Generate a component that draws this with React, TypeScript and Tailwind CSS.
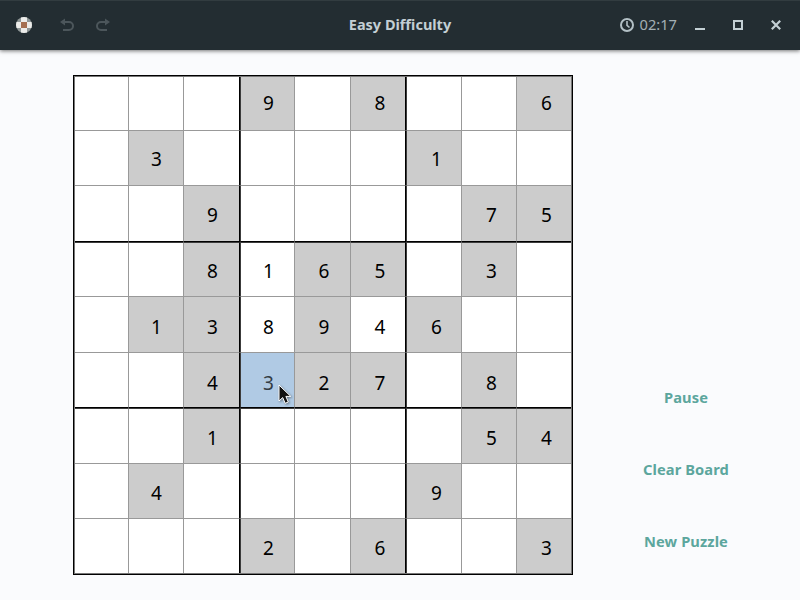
import React from "react";

// "g" prefix marks a given clue, plain digits are the player's entries.
const BOARD = [
  ["", "", "", "g9", "", "g8", "", "", "g6"],
  ["", "g3", "", "", "", "", "g1", "", ""],
  ["", "", "g9", "", "", "", "", "g7", "g5"],
  ["", "", "g8", "1", "g6", "g5", "", "g3", ""],
  ["", "g1", "g3", "8", "g9", "4", "g6", "", ""],
  ["", "", "g4", "3", "g2", "g7", "", "g8", ""],
  ["", "", "g1", "", "", "", "", "g5", "g4"],
  ["", "g4", "", "", "", "", "g9", "", ""],
  ["", "", "", "g2", "", "g6", "", "", "g3"],
];

const PAD_X = ["pl-px", "pl-px", "pl-[2px]", "pl-[2px]", "pl-[3px]", "pl-[4px]", "pl-[5px]", "pl-[5px]", "pl-[5px]"];
const PAD_Y = ["pt-0", "pt-[2px]", "pt-[4px]", "pt-[4px]", "pt-[6px]", "pt-[6px]", "pt-[5px]", "pt-[5px]", "pt-[5px]"];

const vertical = (c: number) =>
  [
    c === 8 ? "" : c % 3 === 2 ? "border-r border-r-black" : "border-r border-r-[#999999]",
    c > 0 && c % 3 === 0 ? "border-l border-l-[#3c3c3c]" : "",
  ].join(" ");
const horizontal = (r: number) =>
  [
    r === 8 ? "" : r % 3 === 2 ? "border-b border-b-black" : "border-b border-b-[#999999]",
    r > 0 && r % 3 === 0 ? "border-t border-t-[#3c3c3c]" : "",
  ].join(" ");

function Cell({ value, r, c }: { value: string; r: number; c: number }) {
  const selected = r === 5 && c === 3;
  const bg = selected ? "bg-[#b0cae4] text-[#333c44]" : value[0] === "g" ? "bg-[#cccccc] text-black" : "bg-white text-black";
  return (
    <div className={`relative flex items-center justify-center ${bg} ${vertical(c)} ${horizontal(r)} ${PAD_X[c]} ${PAD_Y[r]}`}>
      <span className="leading-none">{value.replace("g", "")}</span>
      {selected && (
        <svg className="absolute left-[37px] top-[31px] z-10 drop-shadow-[1px_1px_1px_rgba(0,0,0,0.4)]" width="14" height="21" viewBox="0 0 14 21">
          <path d="M1 1V17L4.7 13.6L7.2 19.3L10.3 18L7.9 12.4H12.8Z" fill="#111" stroke="#fff" strokeWidth="1" />
        </svg>
      )}
    </div>
  );
}

function Header() {
  return (
    <header className="grid h-[50px] grid-cols-[1fr_auto_1fr] items-center border-t border-t-[#323c40] bg-[#232d32] pb-[2px] text-[#c3cfd4] shadow-[0_1px_4px_rgba(0,0,0,0.55)]">
      <div className="flex items-center pl-4">
        <svg width="16" height="16" viewBox="0 0 16 16">
          <defs>
            <clipPath id="disc"><circle cx="8" cy="8" r="8" /></clipPath>
          </defs>
          <g clipPath="url(#disc)">
            <path fill="#8f9696" d="M0 0H16V16H0Z" />
            <path fill="#ececea" d="M5 0H11V16H5ZM0 5H16V11H0Z" />
            <path fill="#a56f51" d="M5 5H11V11H5Z" />
          </g>
        </svg>
        <svg className="ml-7" width="14" height="14" viewBox="0 0 14 14">
          <path d="M3.5 4H9A4 4 0 0 1 9 12H3" fill="none" stroke="#4c565b" strokeWidth="2" />
          <path d="M0 4L5 0.5V7.5Z" fill="#4c565b" />
        </svg>
        <svg className="ml-[22px]" width="14" height="14" viewBox="0 0 14 14">
          <path d="M10.5 4H5A4 4 0 0 0 5 12H11" fill="none" stroke="#4c565b" strokeWidth="2" />
          <path d="M14 4L9 0.5V7.5Z" fill="#4c565b" />
        </svg>
      </div>
      <h1 className="pb-[2px] text-[14.5px] leading-5 font-bold">Easy Difficulty</h1>
      <div className="flex items-center justify-end pr-[19px]">
        <svg width="14" height="14" viewBox="0 0 14 14" fill="none" stroke="#b3c0c6" strokeWidth="2">
          <circle cx="7" cy="7" r="6" />
          <path d="M7 3V7.3L9.5 9.5" strokeWidth="1.6" />
        </svg>
        <span className="ml-[6px] pb-[2px] text-[14.67px] leading-5 text-[#a3afb4]">02:17</span>
        <svg className="ml-[18px]" width="10" height="10" viewBox="0 0 10 10"><path fill="#c3cfd4" d="M0 8H10V10H0Z" /></svg>
        <svg className="ml-7" width="10" height="10" viewBox="0 0 10 10"><path d="M1 1H9V9H1Z" fill="none" stroke="#c3cfd4" strokeWidth="2" /></svg>
        <svg className="ml-7" width="10" height="10" viewBox="0 0 10 10"><path d="M.8 .8L9.2 9.2M9.2 .8L.8 9.2" stroke="#c3cfd4" strokeWidth="2.2" /></svg>
      </div>
    </header>
  );
}

export default function App() {
  return (
    <div className="flex h-[600px] w-[800px] flex-col overflow-hidden bg-[#fafbfd] font-['Noto_Sans',sans-serif]">
      <Header />
      <main className="flex flex-1 pt-[25px] pl-[73px]">
        <div className="h-[500px] w-[500px] border border-black bg-[#777]">
          <div className="grid h-[498px] w-[498px] grid-cols-[54px_55px_56px_55px_56px_55px_56px_55px_54px] grid-rows-[54px_55px_56px_55px_56px_55px_56px_55px_54px] p-px text-[19px]">
            {BOARD.map((row, r) => row.map((value, c) => <Cell key={`${r}-${c}`} value={value} r={r} c={c} />))}
          </div>
        </div>
        <nav className="flex flex-1 flex-col items-center pt-[286px] pr-px text-[14.67px] font-bold tracking-[0.1px] text-[#5ca69d]">
          {["Pause", "Clear Board", "New Puzzle"].map((label) => (
            <button key={label} className="h-[72px] shrink-0 leading-5">{label}</button>
          ))}
        </nav>
      </main>
    </div>
  );
}
